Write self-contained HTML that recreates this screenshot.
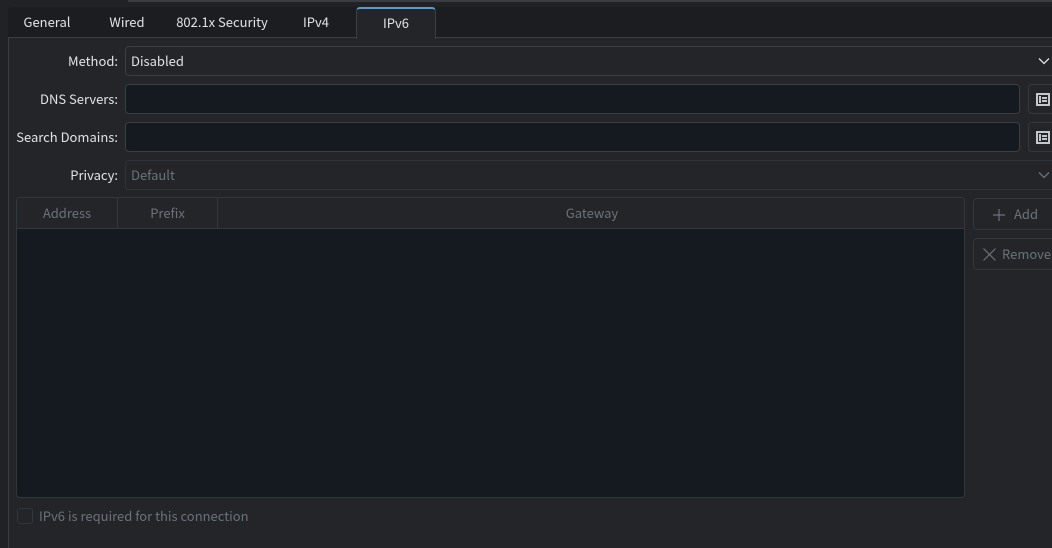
<!DOCTYPE html>
<html><head><meta charset="utf-8"><style>
*{box-sizing:border-box;margin:0;padding:0}
body{width:1052px;height:548px;background:#202226;font-family:"Noto Sans CJK SC","Liberation Sans",sans-serif;font-size:13px;color:#e1e3e6;position:relative;overflow:hidden}
.topline{position:absolute;left:128px;top:0;right:0;height:2px;background:#3a3d42}
.tabbar{position:absolute;left:8px;top:7px;right:0;height:31px;background:#1b1d21;border-radius:4px 0 0 0}
.tab{position:absolute;top:7px;height:31px;line-height:29px;text-align:center;color:#e1e3e6}
.sel{background:#232529;border:1px solid #3b3e43;border-bottom:none;border-top:2px solid #5a9ccc;border-radius:4px 4px 0 0;line-height:27px}
.panel{position:absolute;left:8px;top:37px;right:0;bottom:0;background:#232529;border-left:1px solid #3b3e43;border-top:1px solid #3b3e43}
.lbl{position:absolute;right:934px;text-align:right;height:30px;line-height:29px}
.box{position:absolute;left:125px;height:30px;border:1px solid #3b3e43;border-radius:4px;line-height:27px;padding-left:5px}
.combo{background:#232529;right:-5px}
.inp{background:#151a20;width:895px}
.ib{position:absolute;left:1028px;width:30px;height:30px;border:1px solid #35383d;border-radius:4px;background:#232529}
.ib i{position:absolute;left:7px;top:8px;width:14px;height:13px;border:2px solid #c4c7cb}
.ib i:before{content:"";position:absolute;left:1px;top:1px;width:2px;height:7px;background:#c4c7cb}
.ib i:after{content:"";position:absolute;left:4px;top:2px;width:5px;height:2px;background:#c4c7cb;box-shadow:0 3px 0 #c4c7cb}
.chev{position:absolute;right:6px;top:10px}
.table{position:absolute;left:16px;top:197px;width:949px;height:301px;background:#151a20;border:1px solid #33363b;border-radius:4px;overflow:hidden}
.th{position:absolute;top:0;height:31px;line-height:30px;background:#232529;color:#6d7279;text-align:center;border-right:1px solid #33363b;border-bottom:1px solid #33363b}
.btn{position:absolute;left:973px;width:90px;height:32px;border:1px solid #33363b;border-radius:4px;color:#6d7279;line-height:29px;padding-left:18px}
.dis{color:#6d7279}
</style></head><body>
<div class="topline"></div>
<div class="tabbar"></div>
<div class="tab" style="left:8px;width:78px">General</div>
<div class="tab" style="left:96px;width:62px">Wired</div>
<div class="tab" style="left:168px;width:108px">802.1x Security</div>
<div class="tab" style="left:286px;width:60px">IPv4</div>
<div class="panel"></div>
<div class="tab sel" style="left:356px;width:80px;height:32px">IPv6</div>

<div class="lbl" style="top:46px">Method:</div>
<div class="box combo" style="top:46px">Disabled<svg class="chev" width="12" height="8" viewBox="0 0 12 8"><path d="M1 1.5 L6 6.5 L11 1.5" fill="none" stroke="#e1e3e6" stroke-width="1.3"/></svg></div>

<div class="lbl" style="top:84px">DNS Servers:</div>
<div class="box inp" style="top:84px"></div>
<div class="ib" style="top:84px"><i></i></div>

<div class="lbl" style="top:122px">Search Domains:</div>
<div class="box inp" style="top:122px"></div>
<div class="ib" style="top:122px"><i></i></div>

<div class="lbl" style="top:160px">Privacy:</div>
<div class="box combo dis" style="top:160px;border-color:#2f3237">Default<svg class="chev" width="12" height="8" viewBox="0 0 12 8"><path d="M1 1.5 L6 6.5 L11 1.5" fill="none" stroke="#6d7279" stroke-width="1.3"/></svg></div>

<div class="table">
<div class="th" style="left:0;width:101px">Address</div>
<div class="th" style="left:101px;width:100px">Prefix</div>
<div class="th" style="left:201px;width:748px;border-right:none">Gateway</div>
</div>

<div class="btn" style="top:198px"><svg style="position:absolute;left:19px;top:10px" width="12" height="12"><path d="M6 0V12M0 6H12" stroke="#6d7279" stroke-width="1.2"/></svg><span style="margin-left:22px">Add</span></div>
<div class="btn" style="top:238px;padding-left:0"><svg style="position:absolute;left:9px;top:9px" width="13" height="13"><path d="M0.5 0.5L12.5 12.5M12.5 0.5L0.5 12.5" stroke="#6d7279" stroke-width="1.2"/></svg><span style="margin-left:28px">Remove</span></div>

<div style="position:absolute;left:17px;top:508px;width:16px;height:16px;border:1px solid #33363b;border-radius:3px"></div>
<div class="dis" style="position:absolute;left:39px;top:507px;line-height:17px">IPv6 is required for this connection</div>
</body></html>
